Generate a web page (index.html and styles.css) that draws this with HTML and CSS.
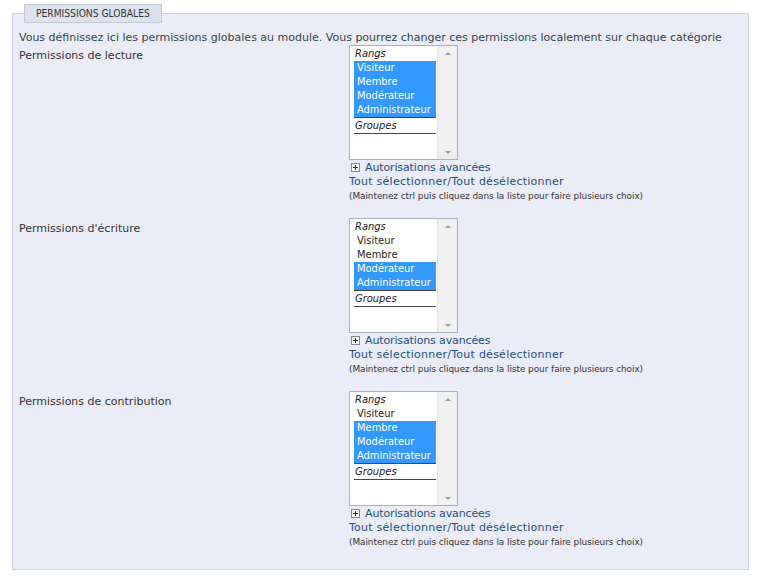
FILE: index.html
```html
<!DOCTYPE html>
<html lang="fr">
<head>
<meta charset="utf-8">
<title>Permissions globales</title>
<link rel="stylesheet" href="styles.css">
</head>
<body>
<fieldset class="panel">
  <legend class="legend">PERMISSIONS GLOBALES</legend>
  <p class="intro">Vous définissez ici les permissions globales au module. Vous pourrez changer ces permissions localement sur chaque catégorie</p>

  <div class="row">
    <div class="label">Permissions de lecture</div>
    <div class="control">
      <div class="listbox">
        <div class="list">
          <div class="group">
            <div class="glabel">Rangs</div>
            <div class="opt sel">Visiteur</div>
            <div class="opt sel">Membre</div>
            <div class="opt sel">Modérateur</div>
            <div class="opt sel">Administrateur</div>
          </div>
          <div class="group">
            <div class="glabel">Groupes</div>
          </div>
        </div>
        <div class="scroll"><span class="up"></span><span class="down"></span></div>
      </div>
      <div class="adv"><span class="plus"></span><span class="advtext">Autorisations avancées</span></div>
      <div class="toggle">Tout sélectionner/Tout désélectionner</div>
      <div class="note">(Maintenez ctrl puis cliquez dans la liste pour faire plusieurs choix)</div>
    </div>
  </div>

  <div class="row">
    <div class="label">Permissions d'écriture</div>
    <div class="control">
      <div class="listbox">
        <div class="list">
          <div class="group">
            <div class="glabel">Rangs</div>
            <div class="opt">Visiteur</div>
            <div class="opt">Membre</div>
            <div class="opt sel">Modérateur</div>
            <div class="opt sel">Administrateur</div>
          </div>
          <div class="group">
            <div class="glabel">Groupes</div>
          </div>
        </div>
        <div class="scroll"><span class="up"></span><span class="down"></span></div>
      </div>
      <div class="adv"><span class="plus"></span><span class="advtext">Autorisations avancées</span></div>
      <div class="toggle">Tout sélectionner/Tout désélectionner</div>
      <div class="note">(Maintenez ctrl puis cliquez dans la liste pour faire plusieurs choix)</div>
    </div>
  </div>

  <div class="row">
    <div class="label">Permissions de contribution</div>
    <div class="control">
      <div class="listbox">
        <div class="list">
          <div class="group">
            <div class="glabel">Rangs</div>
            <div class="opt">Visiteur</div>
            <div class="opt sel">Membre</div>
            <div class="opt sel">Modérateur</div>
            <div class="opt sel">Administrateur</div>
          </div>
          <div class="group">
            <div class="glabel">Groupes</div>
          </div>
        </div>
        <div class="scroll"><span class="up"></span><span class="down"></span></div>
      </div>
      <div class="adv"><span class="plus"></span><span class="advtext">Autorisations avancées</span></div>
      <div class="toggle">Tout sélectionner/Tout désélectionner</div>
      <div class="note">(Maintenez ctrl puis cliquez dans la liste pour faire plusieurs choix)</div>
    </div>
  </div>
</fieldset>
</body>
</html>
```
FILE: styles.css
```css
html, body {
  margin: 0;
  padding: 0;
  background: #ffffff;
}
body {
  padding: 4px 8px 0 12px;
  font-family: "DejaVu Sans", sans-serif;
  font-size: 11px;
  color: #333333;
}
.panel {
  margin: 0;
  width: 737px;
  box-sizing: border-box;
  height: 566px;
  border: 1px solid #cfd5df;
  background: #eaedf8;
  padding: 0 6px;
}
.legend {
  margin-left: 5px;
  padding: 0 11px;
  height: 19px;
  box-sizing: border-box;
  border: 1px solid #c2cad6;
  background: #dde3ee;
  font-family: "DejaVu Sans Condensed", "DejaVu Sans", sans-serif;
  font-size: 10.2px;
  line-height: 17px;
  text-align: left;
  color: #333;
}
.intro {
  margin: 8px 0 0 0;
  line-height: 14px;
  color: #344;
}
.row {
  display: flex;
  height: 173px;
}
.label {
  width: 330px;
  flex: 0 0 330px;
  padding-top: 4px;
  line-height: 14px;
}
.control {
  display: flex;
  flex-direction: column;
  align-items: flex-start;
}
.listbox {
  display: flex;
  width: 109px;
  height: 115px;
  box-sizing: border-box;
  border: 1px solid #a9b0b9;
  background: #ffffff;
  font-family: "DejaVu Sans Condensed", "DejaVu Sans", sans-serif;
}
.list {
  flex: 1;
  padding: 1px 1px 0 4px;
}
.group {
  border-bottom: 1px solid #444;
  margin-bottom: 1px;
}
.glabel {
  font-style: italic;
  line-height: 14px;
  padding-left: 1px;
  color: #222;
}
.opt {
  line-height: 14px;
  padding-left: 3px;
  color: #222;
}
.opt.sel {
  background: #3399ff;
  color: #ffffff;
}
.scroll {
  width: 19px;
  background: #f0f0f0;
  border-left: 1px solid #e4e4e4;
  display: flex;
  flex-direction: column;
  justify-content: space-between;
  align-items: center;
  padding: 6px 0 5px;
}
.up {
  width: 0;
  height: 0;
  border-left: 3px solid transparent;
  border-right: 3px solid transparent;
  border-bottom: 3px solid #9a9a9a;
}
.down {
  width: 0;
  height: 0;
  border-left: 3px solid transparent;
  border-right: 3px solid transparent;
  border-top: 3px solid #9a9a9a;
}
.adv {
  display: flex;
  align-items: center;
  height: 14px;
  padding-left: 2px;
}
.plus {
  width: 7px;
  height: 7px;
  border: 1px solid #8a8a8a;
  background: #fff linear-gradient(#333, #333) center / 5px 1px no-repeat;
  position: relative;
  margin-right: 5px;
}
.plus::after {
  content: "";
  position: absolute;
  left: 3px;
  top: 1px;
  width: 1px;
  height: 5px;
  background: #333;
}
.advtext {
  color: #234e7e;
  letter-spacing: -0.13px;
}
.toggle {
  color: #234e7e;
  line-height: 15px;
  letter-spacing: 0.25px;
}
.note {
  font-size: 8.9px;
  line-height: 15px;
  letter-spacing: -0.04px;
  color: #333;
}
```
